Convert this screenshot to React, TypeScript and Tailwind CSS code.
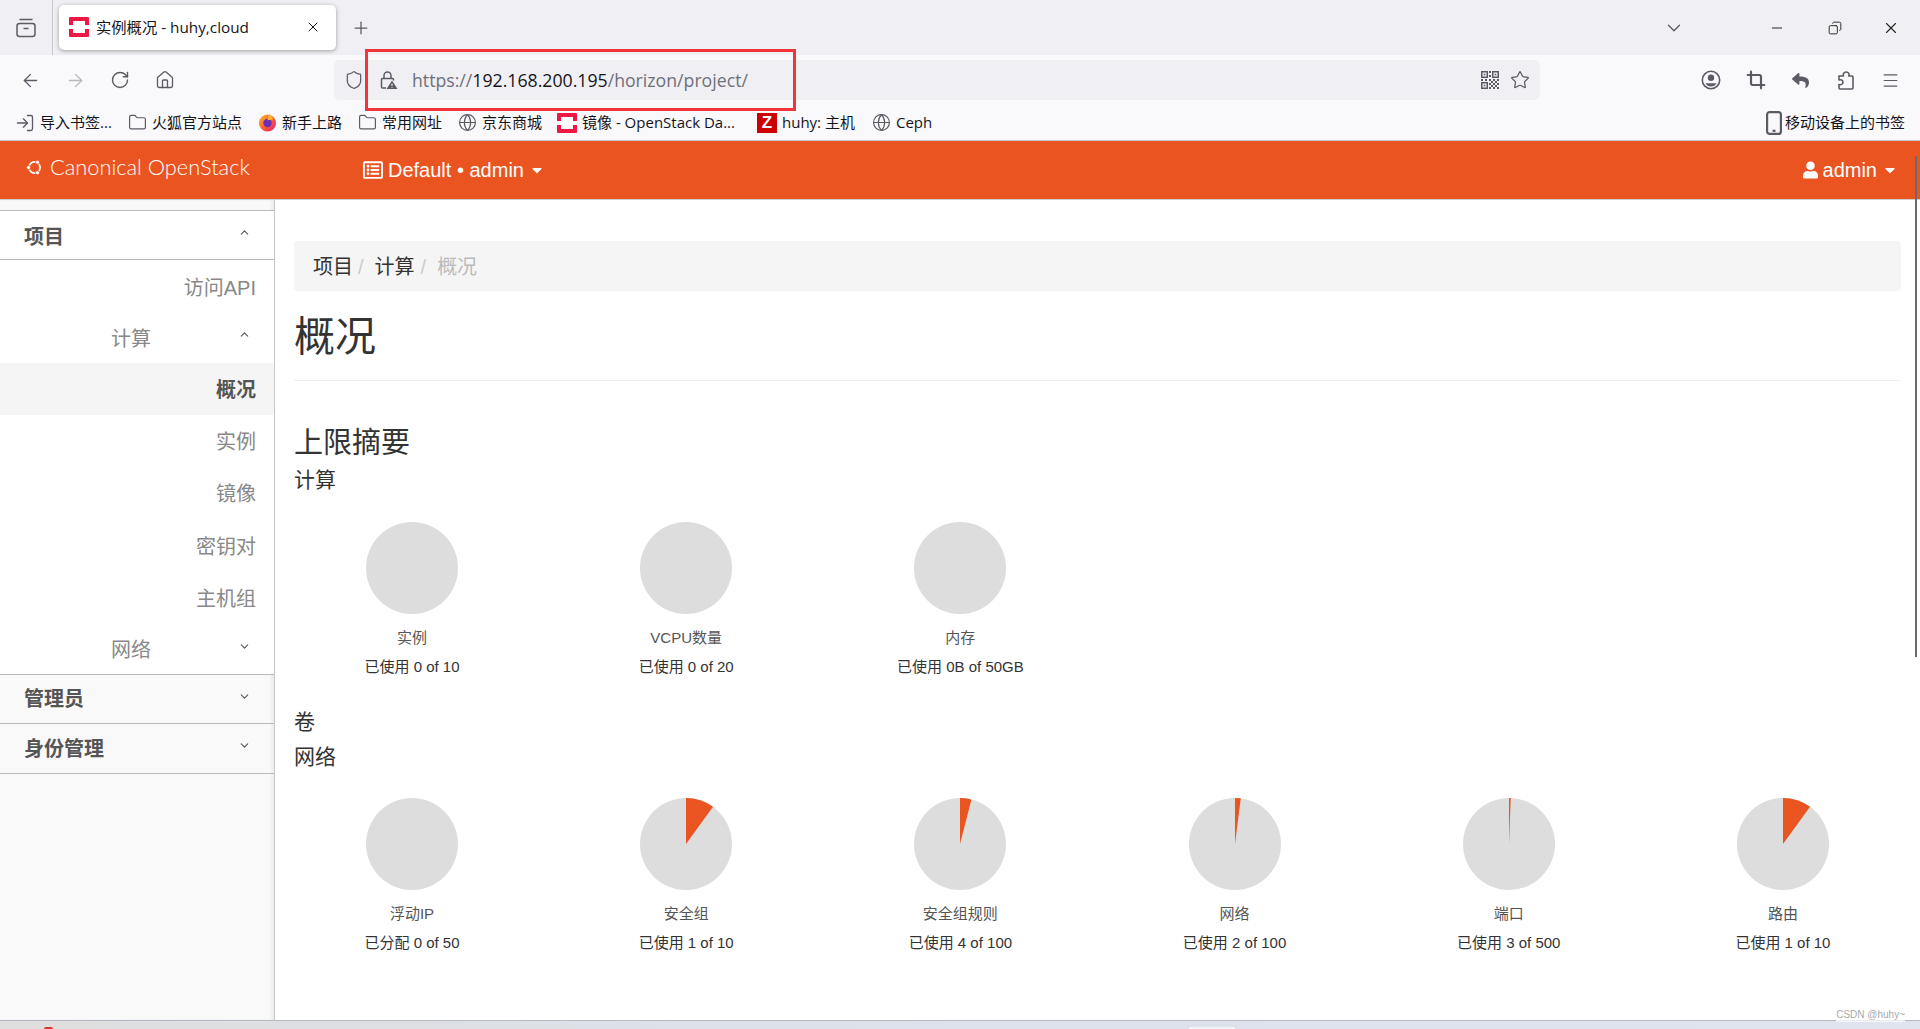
import { ArrowLeft, ArrowRight, ChevronDown, ChevronUp, Copy, Crop, Globe, Home, LogIn, Menu, Minus, Plus, RotateCw, Shield, Star, Folder, X } from "lucide-react";
import { FaRegListAlt, FaUser, FaCaretDown, FaReply } from "react-icons/fa";

const ACCENT = "#ea5420";

function OpenStackIcon({ className }: { className: string }) {
	return (
		<svg viewBox="0 0 20 20" className={className}>
			<rect width="20" height="20" rx="1" fill="#ed1944" />
			<rect x="4" y="4" width="12" height="12" fill="#fff" />
			<rect x="0" y="8" width="4" height="4" fill="#fff" />
			<rect x="16" y="8" width="4" height="4" fill="#fff" />
		</svg>
	);
}

function FirefoxIcon() {
	return (
		<svg viewBox="0 0 20 20" className="w-[19px] h-[19px]">
			<defs>
				<linearGradient id="ffx" x1="0" y1="0" x2="1" y2="1">
					<stop offset="0" stopColor="#ffbd2e" />
					<stop offset="0.55" stopColor="#ff5a36" />
					<stop offset="1" stopColor="#e31587" />
				</linearGradient>
			</defs>
			<circle cx="10" cy="10.5" r="9" fill="url(#ffx)" />
			<circle cx="10" cy="10.5" r="4.4" fill="#6b2fb5" />
			<path d="M12 0.5c1.5 3 3 4 4 6l-6 1z" fill="#ffbd2e" />
		</svg>
	);
}

function CircleOfFriends() {
	return (
		<svg viewBox="0 0 20 20" className="w-[17px] h-[17px]">
			<circle cx="10" cy="10" r="6.6" fill="none" stroke="#fff" strokeWidth="2" />
			<circle cx="3" cy="10" r="2.4" fill="#fff" stroke={ACCENT} strokeWidth="1" />
			<circle cx="13.5" cy="3.9" r="2.4" fill="#fff" stroke={ACCENT} strokeWidth="1" />
			<circle cx="13.5" cy="16.1" r="2.4" fill="#fff" stroke={ACCENT} strokeWidth="1" />
		</svg>
	);
}

function LockWarning() {
	return (
		<svg viewBox="0 0 20 20" className="ml-[14px] w-[20px] h-[20px]" fill="none" stroke="#5b5b66" strokeWidth="1.5">
			<path d="M6 8.5V5.5a3.5 3.5 0 0 1 7 0v3" />
			<path d="M8 18H4.5a1 1 0 0 1-1-1V9.5a1 1 0 0 1 1-1h10a1 1 0 0 1 1 1v1" />
			<path d="M14 10.5l5.5 8.5h-11z" fill="#5b5b66" stroke="none" />
			<path d="M14 13.5v2.6M14 17v.8" stroke="#f0f0f4" strokeWidth="1.1" />
		</svg>
	);
}

function QrIcon() {
	return (
		<svg viewBox="0 0 20 20" className="ml-auto w-[20px] h-[20px]" fill="#5b5b66">
			<path fillRule="evenodd" d="M1 1h7v7H1zM2.5 2.5v4h4v-4zM12 1h7v7h-7zM13.5 2.5v4h4v-4zM1 12h7v7H1zM2.5 13.500v4h4v-4z" />
			<path d="M3.700 3.700h1.600v1.600H3.700zM14.700 3.700h1.600v1.600h-1.600zM3.700 14.700h1.600v1.600H3.700z" />
			<path d="M9 1h2v2H9zM9 5h2v2H9zM1 9h2v2H1zM5 9h2v2H5zM9 9h2v2H9zM13 9h2v2h-2zM17 9h2v2h-2zM11 11h2v2h-2zM15 11h2v2h-2zM9 13h2v2H9zM13 13h2v2h-2zM17 13h2v2h-2zM11 15h2v2h-2zM15 15h2v2h-2zM9 17h2v2H9zM13 17h2v2h-2zM17 17h2v2h-2z" />
		</svg>
	);
}

function AccountIcon() {
	return (
		<svg viewBox="0 0 20 20" className="ml-[161px] w-[20px] h-[20px]" fill="#5b5b66">
			<circle cx="10" cy="10" r="8.700" fill="none" stroke="#5b5b66" strokeWidth="1.600" />
			<circle cx="10" cy="7.800" r="3.200" />
			<path d="M4.500 13.200h11c-.9 2-3 3.300-5.500 3.300s-4.600-1.300-5.500-3.300z" />
		</svg>
	);
}

function PuzzleIcon() {
	return (
		<svg viewBox="0 0 20 20" className="ml-[26px] w-[20px] h-[20px]" fill="none" stroke="#5b5b66" strokeWidth="1.600" strokeLinejoin="round">
			<path d="M3 6h4.500c-.8-1.600.2-4 2.700-4s3.500 2.400 2.600 4H16a1 1 0 0 1 1 1v11a1 1 0 0 1-1 1H4a1 1 0 0 1-1-1v-3.500c1.600.7 4-.2 4-2.300s-2.400-3-4-2.200V7a1 1 0 0 1 0-1z" />
		</svg>
	);
}

function PhoneIcon() {
	return (
		<svg viewBox="0 0 16 24" className="w-[16px] h-[24px] mr-[3px]" fill="none" stroke="#5b5b66" strokeWidth="2.200">
			<rect x="1.100" y="1.100" width="13.800" height="21.800" rx="2.500" />
			<path d="M6.500 19.800h3" />
		</svg>
	);
}

function Bookmark({ icon, label, className }: { icon: React.ReactNode; label: string; className: string }) {
	return (
		<div className={"flex items-center gap-[5px] " + className}>
			{icon}
			<span className="whitespace-nowrap">{label}</span>
		</div>
	);
}

function Pie({ value, max }: { value: number; max: number }) {
	const angle = (value / max) * Math.PI * 2;
	const x = 46 + 46 * Math.sin(angle);
	const y = 46 - 46 * Math.cos(angle);
	return (
		<svg viewBox="0 0 92 92" className="w-[92px] h-[92px]">
			<circle cx="46" cy="46" r="46" fill="#dddddd" />
			{value > 0 && <path d={`M46 46L46 0A46 46 0 0 1 ${x} ${y}Z`} fill={ACCENT} />}
		</svg>
	);
}

function Quota({ title, used, value, max, suffix }: { title: string; used: string; value: number; max: number; suffix: string }) {
	return (
		<div className="w-[236px] flex flex-col items-center">
			<Pie value={value} max={max} />
			<div className="mt-[14px] text-[15px] leading-[20px] text-[#555]">{title}</div>
			<div className="mt-[9px] text-[15px] leading-[20px] text-[#333]">
				{used} {suffix}
			</div>
		</div>
	);
}

function SubItem({ label, active }: { label: string; active?: boolean }) {
	return (
		<div
			className={
				"h-[52.3px] pt-[1px] flex items-center justify-end pr-[18px] text-[20px] " +
				(active ? "bg-[#f5f5f5] font-bold text-[#555]" : "text-[#888]")
			}
		>
			{label}
		</div>
	);
}

function Section({ label, height }: { label: string; height: string }) {
	return (
		<div className={"flex items-center justify-between pl-[24px] pr-[23px] border-b border-[#b9b9b9] " + height}>
			<span className="text-[20px] font-bold text-[#555]">{label}</span>
			<ChevronDown className="w-[13px] h-[13px] text-[#555] -mt-[6px]" strokeWidth={2} />
		</div>
	);
}

export default function App() {
	return (
		<div className="relative w-[1920px] h-[1029px] overflow-hidden bg-white font-['Liberation_Sans','Noto_Sans_CJK_SC',sans-serif]">
			{/* tab strip */}
			<div className="h-[55px] bg-[#f0f0f4] flex items-center text-[#15141a] font-['Open_Sans','Noto_Sans_CJK_SC',sans-serif]">
				<div className="w-[53px] h-full flex items-center justify-center border-r border-[#c8c8cc] shrink-0">
					<svg viewBox="0 0 20 20" className="w-[20px] h-[20px]" fill="none" stroke="#5b5b66" strokeWidth="1.5">
						<rect x="1" y="5.5" width="18" height="13" rx="2.5" />
						<path d="M3.5 1.5h13M7.5 10.5h5" />
					</svg>
				</div>
				<div className="ml-[6px] w-[277px] h-[45px] -mt-[1px] bg-white rounded-[5px] shadow-[0_1px_4px_rgba(0,0,0,0.35)] flex items-center pl-[10px] pr-[15px]">
					<OpenStackIcon className="w-[20px] h-[20px]" />
					<span className="ml-[7px] text-[15.300px] whitespace-nowrap">实例概况 - huhy,cloud</span>
					<X className="ml-auto w-[16px] h-[16px] text-[#15141a]" strokeWidth={1.5} />
				</div>
				<Plus className="ml-[15px] w-[20px] h-[20px] text-[#5b5b66]" strokeWidth={1.5} />
				<ChevronDown className="ml-auto w-[22px] h-[22px] text-[#5b5b66]" strokeWidth={1.4} />
				<Minus className="ml-[84px] w-[16px] h-[16px] text-[#222]" strokeWidth={1.5} />
				<Copy className="ml-[43px] w-[14px] h-[14px] text-[#222] -scale-x-100" strokeWidth={1.6} />
				<X className="ml-[40px] mr-[20px] w-[18px] h-[18px] text-[#222]" strokeWidth={1.5} />
			</div>

			{/* nav toolbar */}
			<div className="h-[50px] bg-[#f9f9fb] flex items-center text-[#5b5b66] pl-[20px]">
				<ArrowLeft className="w-[21px] h-[21px]" strokeWidth={1.5} />
				<ArrowRight className="ml-[24px] w-[21px] h-[21px] text-[#b9b9be]" strokeWidth={1.5} />
				<RotateCw className="ml-[24px] w-[20px] h-[20px]" strokeWidth={1.7} />
				<Home className="ml-[25px] w-[20px] h-[20px]" strokeWidth={1.6} />
				<div className="ml-[159px] w-[1206px] h-[40px] rounded-[5px] bg-[#f0f0f4] flex items-center pl-[10px] pr-[10px]">
					<Shield className="w-[20px] h-[20px]" strokeWidth={1.5} />
					<LockWarning />
					<span className="ml-[14px] text-[17.700px] whitespace-nowrap text-[#6f6f78] font-['Open_Sans','Noto_Sans_CJK_SC',sans-serif]">
						https://<span className="text-[#15141a]">192.168.200.195</span>/horizon/project/
					</span>
					<QrIcon />
					<Star className="ml-[10px] w-[20px] h-[20px]" strokeWidth={1.5} />
				</div>
				<AccountIcon />
				<Crop className="ml-[25px] w-[20px] h-[20px]" strokeWidth={2.6} />
				<FaReply className="ml-[25px] w-[19px] h-[17px]" />
				<PuzzleIcon />
				<Menu className="ml-[25px] w-[19px] h-[19px]" strokeWidth={1.5} />
			</div>

			{/* bookmarks */}
			<div className="h-[35px] bg-[#f9f9fb] flex items-center text-[15px] text-[#15141a] pl-[15px] pr-[15px] font-['Open_Sans','Noto_Sans_CJK_SC',sans-serif]">
				<Bookmark icon={<LogIn className="w-[20px] h-[20px] text-[#5b5b66]" strokeWidth={1.6} />} label="导入书签..." className="w-[113px]" />
				<Bookmark icon={<Folder className="w-[19px] h-[19px] text-[#5b5b66]" strokeWidth={1.5} />} label="火狐官方站点" className="w-[130px]" />
				<Bookmark icon={<FirefoxIcon />} label="新手上路" className="w-[100px]" />
				<Bookmark icon={<Folder className="w-[19px] h-[19px] text-[#5b5b66]" strokeWidth={1.5} />} label="常用网址" className="w-[100px]" />
				<Bookmark icon={<Globe className="w-[19px] h-[19px] text-[#5b5b66]" strokeWidth={1.5} />} label="京东商城" className="w-[99px]" />
				<Bookmark icon={<OpenStackIcon className="w-[20px] h-[20px]" />} label="镜像 - OpenStack Da..." className="w-[200px]" />
				<Bookmark
					icon={
						<span className="w-[20px] h-[20px] bg-[#cc0000] text-white font-bold text-[17px] leading-[20px] text-center font-['Liberation_Sans',sans-serif]">
							Z
						</span>
					}
					label="huhy: 主机"
					className="w-[115px]"
				/>
				<Bookmark icon={<Globe className="w-[19px] h-[19px] text-[#5b5b66]" strokeWidth={1.5} />} label="Ceph" className="w-[80px]" />
				<div className="ml-auto flex items-center">
					<PhoneIcon />
					<span className="whitespace-nowrap">移动设备上的书签</span>
				</div>
			</div>

			{/* openstack navbar */}
			<div className="h-[60px] border-t border-b border-t-[#c6c6cc] border-b-[#cfcfcf] bg-[#ea5420] flex items-center text-white text-[20px]">
				<div className="w-[363px] pl-[26px] flex items-center -mt-[6px]">
					<CircleOfFriends />
					<span className="ml-[7px] text-[21.800px] font-light font-['Lato',sans-serif] whitespace-nowrap">Canonical OpenStack</span>
				</div>
				<FaRegListAlt className="w-[20px] h-[20px]" />
				<span className="ml-[5px] whitespace-nowrap">Default • admin</span>
				<FaCaretDown className="ml-[5px] w-[16px] h-[16px]" />
				<FaUser className="ml-auto w-[15px] h-[18px]" />
				<span className="ml-[5px]">admin</span>
				<FaCaretDown className="ml-[5px] mr-[22px] w-[16px] h-[16px]" />
			</div>

			<div className="flex h-[820px]">
				{/* sidebar */}
				<div className="w-[275px] shrink-0 bg-[#f9f9f9] border-r border-[#c8c8c8] shadow-[inset_-3px_0_3px_rgba(0,0,0,0.05)] flex flex-col">
					<div className="h-[11px] border-b border-[#b9b9b9]" />
					<div className="bg-white">
						<div className="h-[49px] pt-[3px] flex items-center justify-between pl-[24px] pr-[23px] border-b border-[#b9b9b9]">
							<span className="text-[20px] font-bold text-[#555]">项目</span>
							<ChevronUp className="w-[13px] h-[13px] text-[#555] -mt-[9px]" strokeWidth={2} />
						</div>
						<div className="h-[52px] pt-[3px] flex items-center justify-end pr-[18px] text-[20px] text-[#888]">访问API</div>
						<div className="h-[51px] pt-[2px] flex items-center pl-[111px] pr-[23px] justify-between text-[20px] text-[#888]">
							计算
							<ChevronUp className="w-[13px] h-[13px] text-[#555] -mt-[8px]" strokeWidth={2} />
						</div>
						<SubItem label="概况" active />
						<SubItem label="实例" />
						<SubItem label="镜像" />
						<SubItem label="密钥对" />
						<SubItem label="主机组" />
						<div className="h-[50px] pt-[1px] flex items-center pl-[111px] pr-[23px] justify-between text-[20px] text-[#888]">
							网络
							<ChevronDown className="w-[13px] h-[13px] text-[#555] -mt-[7px]" strokeWidth={2} />
						</div>
					</div>
					<div className="border-t border-[#b9b9b9]">
						<Section label="管理员" height="h-[49px]" />
						<Section label="身份管理" height="h-[50px]" />
					</div>
				</div>

				{/* content */}
				<div className="flex-1 pl-[19px] pr-[19px] pt-[41px] text-[#333]">
					<div className="h-[50px] pt-[2px] bg-[#f5f5f5] rounded-[4px] flex items-center pl-[19px] text-[20px]">
						<span>项目</span>
						<span className="ml-[5px] text-[#ccc]">/</span>
						<span className="ml-[11px]">计算</span>
						<span className="ml-[6px] text-[#ccc]">/</span>
						<span className="ml-[11px] text-[#bbb]">概况</span>
					</div>
					<h1 className="mt-[16px] text-[41px] leading-[60px] pb-[13px] border-b border-[#eee]">概况</h1>
					<h2 className="mt-[40px] text-[29px] leading-[44px]">上限摘要</h2>
					<h3 className="mt-[0px] text-[21px] leading-[30px]">计算</h3>
					<div className="mt-[27px] flex gap-[38.200px]">
						<Quota title="实例" used="已使用" suffix="0 of 10" value={0} max={10} />
						<Quota title="VCPU数量" used="已使用" suffix="0 of 20" value={0} max={20} />
						<Quota title="内存" used="已使用" suffix="0B of 50GB" value={0} max={50} />
					</div>
					<h3 className="mt-[30px] text-[21px] leading-[30px]">卷</h3>
					<h3 className="mt-[5px] text-[21px] leading-[30px]">网络</h3>
					<div className="mt-[26px] flex gap-[38.200px]">
						<Quota title="浮动IP" used="已分配" suffix="0 of 50" value={0} max={50} />
						<Quota title="安全组" used="已使用" suffix="1 of 10" value={1} max={10} />
						<Quota title="安全组规则" used="已使用" suffix="4 of 100" value={4} max={100} />
						<Quota title="网络" used="已使用" suffix="2 of 100" value={2} max={100} />
						<Quota title="端口" used="已使用" suffix="3 of 500" value={3} max={500} />
						<Quota title="路由" used="已使用" suffix="1 of 10" value={1} max={10} />
					</div>
				</div>
			</div>

			{/* desktop taskbar sliver */}
			<div className="h-[9px] border-t border-[#b4b8c2] bg-gradient-to-r from-[#dedede] via-[#dde2ec] to-[#dfe4ee] flex items-end">
				<div className="ml-[44px] w-[9px] h-[2px] rounded-t-full bg-[#d9352c]" />
				<div className="ml-[1136px] w-[46px] h-[2px] rounded-t-[3px] bg-[#f3f4f7]" />
			</div>

			{/* page scrollbar and watermark lie over the page */}
			<div className="absolute right-[3px] top-[156px] w-[2px] h-[501px] bg-[#6a6a6a]" />
			<div className="absolute right-[15px] top-[1007px] text-[10px] text-[#aaa] bg-white/70">CSDN @huhy~</div>

			{/* annotation box */}
			<div className="absolute left-[365px] top-[49px] w-[431px] h-[62px] border-[3px] border-[#f0353b]" />
		</div>
	);
}
